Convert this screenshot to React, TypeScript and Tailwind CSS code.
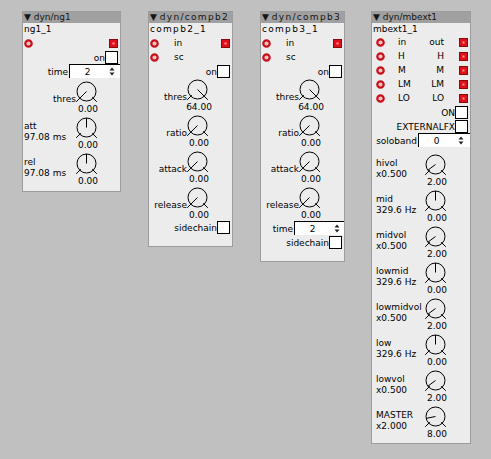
import React from "react";

function Inlet() {
  return (
    <svg width="9" height="9" viewBox="0 0 9 9" className="shrink-0">
      <circle cx="4.5" cy="4.5" r="3.2" fill="#f2c4c4" stroke="#c8101a" strokeWidth="2.2" />
    </svg>
  );
}

function Outlet() {
  return (
    <svg width="9" height="9" viewBox="0 0 9 9" className="shrink-0">
      <rect x="0.5" y="0.5" width="8" height="8" fill="#e0101a" stroke="#8a0a0a" />
      <rect x="3.5" y="3.5" width="2" height="2" fill="#f49a9a" />
    </svg>
  );
}

function Spin() {
  return (
    <svg width="6" height="9" viewBox="0 0 6 9" className="shrink-0">
      <path d="M0.5 3.5 L3 0.5 L5.5 3.5 Z" fill="#222" />
      <path d="M0.5 5.5 L3 8.5 L5.5 5.5 Z" fill="#222" />
    </svg>
  );
}

function Dial({ f }: { f: number }) {
  const a = ((225 - 270 * f) * Math.PI) / 180;
  const cx = 10.5;
  const cy = 10.5;
  const x2 = cx + 9.5 * Math.cos(a);
  const y2 = cy - 9.5 * Math.sin(a);
  return (
    <svg width="21" height="23" viewBox="0 0 21 23" className="shrink-0 overflow-visible">
      <circle cx={cx} cy={cy} r="9.5" fill="none" stroke="#000" strokeWidth="1" />
      <line x1="4.8" y1="16.2" x2="0.2" y2="20.8" stroke="#000" />
      <line x1="16.2" y1="16.2" x2="20.8" y2="20.8" stroke="#000" />
      <line x1={cx} y1={cy} x2={x2} y2={y2} stroke="#000" />
    </svg>
  );
}

type KnobProps = { label: string; sub?: string; value: string; f: number; lw: string };

function Knob({ label, sub, value, f, lw }: KnobProps) {
  return (
    <div className="flex h-[33px]">
      {sub ? (
        <div className={`${lw} shrink-0 pt-[4px] leading-[11px] whitespace-nowrap`}>
          <div>{label}</div>
          <div>{sub}</div>
        </div>
      ) : (
        <div className={`${lw} flex h-[23px] shrink-0 items-end justify-end leading-[10px]`}>{label}</div>
      )}
      <div className="flex flex-col">
        <Dial f={f} />
        <div className="flex w-[21px] justify-center pl-[3px] leading-[10px] whitespace-nowrap">{value}</div>
      </div>
    </div>
  );
}

function IoRow({ inL, outL, pl, gap, out = true }: { inL?: string; outL?: string; pl: string; gap: string; out?: boolean }) {
  return (
    <div className={`flex h-[14px] items-center pr-[2px] ${pl}`}>
      <Inlet />
      {inL && <span className={`${gap} leading-[10px]`}>{inL}</span>}
      <div className="flex-1" />
      {outL && <span className="mr-[15px] leading-[10px]">{outL}</span>}
      {out && <Outlet />}
    </div>
  );
}

function Check({ label }: { label: string }) {
  return (
    <div className="flex h-[14px] items-end justify-end pr-[2px]">
      <span className="leading-[12px]">{label}</span>
      <div className="h-[13px] w-[13px] border border-black bg-white" />
    </div>
  );
}

function NumBox({ label, value, w }: { label: string; value: string; w: string }) {
  return (
    <div className="flex h-[14px] items-end justify-end">
      <span className="mr-[1px] leading-[12px]">{label}</span>
      <div className={`${w} flex h-[14px] items-center border-t border-l border-black bg-white`}>
        <span className="w-[35px] text-center leading-[12px]">{value}</span>
        <span className="ml-[4px]">
          <Spin />
        </span>
      </div>
    </div>
  );
}

type PanelProps = { cls: string; title: string; name: string; track?: string; nameH?: string; children: React.ReactNode };

function Panel({ cls, title, name, track = "", nameH = "h-[13px]", children }: PanelProps) {
  return (
    <div className={`${cls} flex shrink-0 flex-col border border-[#9c9c9c] bg-[#ececec]`}>
      <div className="h-[11px] bg-[#a0a0a0] pl-[1px] leading-[11px] whitespace-nowrap text-[#161616]">
        ▼ <span className={track}>{title}</span>
      </div>
      <div className={`${nameH} ${track} pl-[1px] leading-[13px]`}>{name}</div>
      {children}
    </div>
  );
}

export default function App() {
  const lo = 2 / 64;
  return (
    <div className="flex min-h-screen w-full items-start bg-[#c0c0c0] pt-[11px] font-['DejaVu_Sans',sans-serif] text-[9px] text-black">
      <Panel cls="ml-[22px] w-[99px] pb-[5px]" title="dyn/ng1" name="ng1_1">
        <IoRow pl="pl-[1px]" gap="ml-[14px]" />
        <Check label="on" />
        <NumBox label="time" value="2" w="w-[51px]" />
        <div className="mt-[3px] flex flex-col gap-[3px]">
          <Knob label="thres" value="0.00" f={0} lw="w-[53px]" />
          <Knob label="att" sub="97.08 ms" value="0.00" f={0.5} lw="w-[53px] pl-[1px]" />
          <Knob label="rel" sub="97.08 ms" value="0.00" f={0.5} lw="w-[53px] pl-[1px]" />
        </div>
      </Panel>

      <Panel cls="ml-[27px] w-[85px] pb-[12px]" title="dyn/compb2" name="compb2_1" track="tracking-[1.3px]">
        <IoRow inL="in" pl="pl-[1px]" gap="ml-[15px]" />
        <IoRow inL="sc" pl="pl-[1px]" gap="ml-[15px]" out={false} />
        <Check label="on" />
        <div className="mt-[1px] flex flex-col gap-[3px]">
          <Knob label="thres" value="64.00" f={1} lw="w-[38px]" />
          <Knob label="ratio" value="0.00" f={0} lw="w-[38px]" />
          <Knob label="attack" value="0.00" f={0} lw="w-[38px]" />
          <Knob label="release" value="0.00" f={0} lw="w-[38px]" />
        </div>
        <Check label="sidechain" />
      </Panel>

      <Panel cls="ml-[27px] w-[85px] pb-[12px]" title="dyn/compb3" name="compb3_1" track="tracking-[1.3px]">
        <IoRow inL="in" pl="pl-[1px]" gap="ml-[15px]" />
        <IoRow inL="sc" pl="pl-[1px]" gap="ml-[15px]" out={false} />
        <Check label="on" />
        <div className="mt-[1px] flex flex-col gap-[3px]">
          <Knob label="thres" value="64.00" f={1} lw="w-[38px]" />
          <Knob label="ratio" value="0.00" f={0} lw="w-[38px]" />
          <Knob label="attack" value="0.00" f={0} lw="w-[38px]" />
          <Knob label="release" value="0.00" f={0} lw="w-[38px]" />
        </div>
        <div className="mt-[1px]">
          <NumBox label="time" value="2" w="w-[50px]" />
        </div>
        <Check label="sidechain" />
      </Panel>

      <Panel cls="ml-[26px] w-[100px] pb-[4px]" title="dyn/mbext1" name="mbext1_1" nameH="h-[12px]">
        <IoRow inL="in" outL="out" pl="pl-[4px]" gap="ml-[13px]" />
        <IoRow inL="H" outL="H" pl="pl-[4px]" gap="ml-[13px]" />
        <IoRow inL="M" outL="M" pl="pl-[4px]" gap="ml-[13px]" />
        <IoRow inL="LM" outL="LM" pl="pl-[4px]" gap="ml-[13px]" />
        <IoRow inL="LO" outL="LO" pl="pl-[4px]" gap="ml-[13px]" />
        <Check label="ON" />
        <Check label="EXTERNALFX" />
        <NumBox label="soloband" value="0" w="w-[52px]" />
        <div className="mt-[7px] flex flex-col gap-[3px]">
          <Knob label="hivol" sub="x0.500" value="2.00" f={lo} lw="w-[53px] pl-[4px]" />
          <Knob label="mid" sub="329.6 Hz" value="0.00" f={0.5} lw="w-[53px] pl-[4px]" />
          <Knob label="midvol" sub="x0.500" value="2.00" f={lo} lw="w-[53px] pl-[4px]" />
          <Knob label="lowmid" sub="329.6 Hz" value="0.00" f={0.5} lw="w-[53px] pl-[4px]" />
          <Knob label="lowmidvol" sub="x0.500" value="2.00" f={lo} lw="w-[53px] pl-[4px]" />
          <Knob label="low" sub="329.6 Hz" value="0.00" f={0.5} lw="w-[53px] pl-[4px]" />
          <Knob label="lowvol" sub="x0.500" value="2.00" f={lo} lw="w-[53px] pl-[4px]" />
          <Knob label="MASTER" sub="x2.000" value="8.00" f={8 / 64} lw="w-[53px] pl-[4px]" />
        </div>
      </Panel>
    </div>
  );
}
